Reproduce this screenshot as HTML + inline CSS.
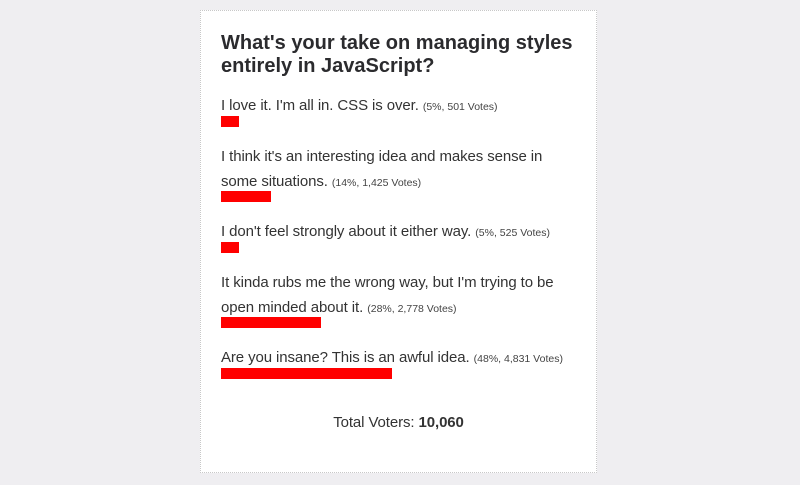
<!DOCTYPE html>
<html><head><meta charset="utf-8"><style>
body{margin:0;background:#efeef1;width:800px;height:485px;position:relative;overflow:hidden;font-family:"Liberation Sans",sans-serif;color:#333}
.card{position:absolute;left:200px;top:10px;width:395px;height:461px;background:#fff;border:1px dotted #c8c8c8}
.t{position:absolute;left:221px;white-space:nowrap}
.h{font-weight:bold;font-size:20px;color:#2b2b2e;letter-spacing:0}
.a{font-size:15px;color:#333;letter-spacing:-0.1px}
.a small{font-size:10.5px;color:#444;letter-spacing:0}
.b{position:absolute;left:221px;height:11px;background:#f00}
</style></head><body>
<div class="card"></div>
<div class="t h" style="top:32px">What's your take on managing styles</div>
<div class="t h" style="top:55px">entirely in JavaScript?</div>
<div class="t a" style="top:97px">I love it. I'm all in. CSS is over. <small>(5%, 501 Votes)</small></div>
<div class="b" style="top:116px;width:18px"></div>
<div class="t a" style="top:148px">I think it's an interesting idea and makes sense in</div>
<div class="t a" style="top:173px">some situations. <small>(14%, 1,425 Votes)</small></div>
<div class="b" style="top:191px;width:50px"></div>
<div class="t a" style="top:223px">I don't feel strongly about it either way. <small>(5%, 525 Votes)</small></div>
<div class="b" style="top:242px;width:18px"></div>
<div class="t a" style="top:274px">It kinda rubs me the wrong way, but I'm trying to be</div>
<div class="t a" style="top:299px">open minded about it. <small>(28%, 2,778 Votes)</small></div>
<div class="b" style="top:317px;width:100px"></div>
<div class="t a" style="top:349px">Are you insane? This is an awful idea. <small>(48%, 4,831 Votes)</small></div>
<div class="b" style="top:368px;width:171px"></div>
<div class="t a" style="top:414px;left:200px;width:397px;text-align:center">Total Voters: <b>10,060</b></div>
</body></html>
